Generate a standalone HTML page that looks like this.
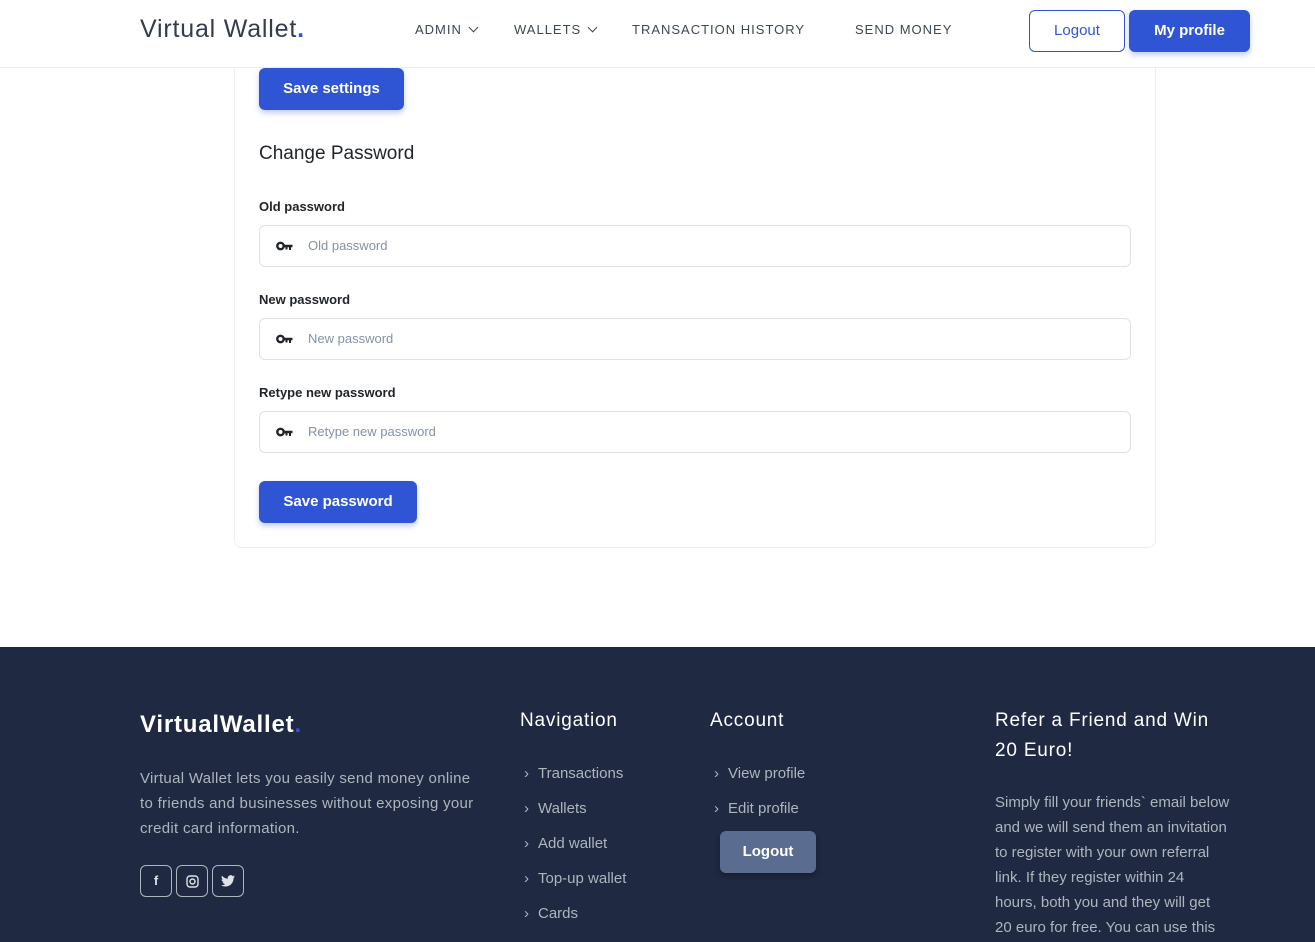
<!DOCTYPE html>
<html><head><meta charset="utf-8"><style>
*{box-sizing:border-box;margin:0;padding:0}
body{width:1315px;height:942px;overflow:hidden;font-family:"Liberation Sans",sans-serif;background:#fff;position:relative;color:#212529}
.hdr{position:absolute;left:0;top:0;width:1315px;height:68px;background:#fff;border-bottom:1px solid #eceef2;z-index:2}
.logo{position:absolute;left:140px;top:15px;font-size:25px;color:#333b4d;letter-spacing:.8px}
.logo b,.flogo b{color:#2f55d4}
.nav{position:absolute;top:22px;font-size:13px;letter-spacing:1px;color:#3c4858}
.chev{display:inline-block;width:7px;height:7px;border-right:1.5px solid #3c4858;border-bottom:1.5px solid #3c4858;transform:rotate(45deg);margin-left:8px;position:relative;top:-3px}
.btn{position:absolute;border-radius:6px;font-size:15px;text-align:center}
.card{position:absolute;left:234px;top:40px;width:922px;height:508px;border:1px solid #eceef2;border-top:none;border-radius:0 0 8px 8px}
.pbtn{background:#2f55d4;color:#fff;font-weight:bold;box-shadow:0 3px 6px rgba(47,85,212,.3)}
.lbl{position:absolute;left:259px;font-size:13px;font-weight:bold;color:#212529}
.inp{position:absolute;left:259px;width:872px;height:42px;border:1px solid #dee2e6;border-radius:6px;font-size:13px;color:#8492a6;padding:12px 0 0 48px}
.key{position:absolute;left:16px;top:15px;width:17px;height:10px}
.foot{position:absolute;left:0;top:647px;width:1315px;height:295px;background:#202942;color:#adb5bd}
.foot h5{position:absolute;color:#fff;font-size:19px;font-weight:normal;letter-spacing:.8px;line-height:30px}
.foot p{position:absolute;font-size:15px;line-height:25px;white-space:nowrap}
.li{position:absolute;font-size:15px}
.li:before{content:"›";margin-right:9px;font-size:15px}
.soc{position:absolute;top:218px;width:32px;height:32px;border:1px solid #adb5bd;border-radius:6px;color:#dee2e6;font-size:13px;text-align:center;line-height:30px;font-weight:bold}
</style></head><body>
<div class="hdr">
<div class="logo">Virtual Wallet<b>.</b></div>
<div class="nav" style="left:415px">ADMIN<span class="chev"></span></div>
<div class="nav" style="left:514px">WALLETS<span class="chev"></span></div>
<div class="nav" style="left:632px">TRANSACTION HISTORY</div>
<div class="nav" style="left:855px">SEND MONEY</div>
<div class="btn" style="left:1029px;top:10px;width:96px;height:42px;border:1px solid #2f55d4;color:#2f55d4;line-height:40px">Logout</div>
<div class="btn pbtn" style="left:1129px;top:10px;width:121px;height:42px;line-height:42px">My profile</div>
</div>
<div class="card"></div>
<div class="btn pbtn" style="left:259px;top:68px;width:145px;height:42px;line-height:42px">Save settings</div>
<div style="position:absolute;left:259px;top:143px;font-size:19px;color:#212529">Change Password</div>
<div class="lbl" style="top:199px">Old password</div>
<div class="inp" style="top:225px"><svg class="key" viewBox="0 0 17 10"><circle cx="4.5" cy="5" r="3.2" fill="none" stroke="#212529" stroke-width="2.4"/><path d="M7 3.8h9.5v2.4H15V9h-2V6.2h-1.5V8.5h-2V6.2H7z" fill="#212529"/></svg>Old password</div>
<div class="lbl" style="top:292px">New password</div>
<div class="inp" style="top:318px"><svg class="key" viewBox="0 0 17 10"><circle cx="4.5" cy="5" r="3.2" fill="none" stroke="#212529" stroke-width="2.4"/><path d="M7 3.8h9.5v2.4H15V9h-2V6.2h-1.5V8.5h-2V6.2H7z" fill="#212529"/></svg>New password</div>
<div class="lbl" style="top:385px">Retype new password</div>
<div class="inp" style="top:411px"><svg class="key" viewBox="0 0 17 10"><circle cx="4.5" cy="5" r="3.2" fill="none" stroke="#212529" stroke-width="2.4"/><path d="M7 3.8h9.5v2.4H15V9h-2V6.2h-1.5V8.5h-2V6.2H7z" fill="#212529"/></svg>Retype new password</div>
<div class="btn pbtn" style="left:259px;top:481px;width:158px;height:42px;line-height:42px">Save password</div>
<div class="foot">
<div class="flogo" style="position:absolute;left:140px;top:64px;font-size:24px;color:#fff;font-weight:bold;letter-spacing:.8px">VirtualWallet<b>.</b></div>
<p style="left:140px;top:119px;letter-spacing:.3px">Virtual Wallet lets you easily send money online<br>to friends and businesses without exposing your<br>credit card information.</p>
<div class="soc" style="left:140px">f</div><div class="soc" style="left:176px"><svg width="13" height="13" viewBox="0 0 13 13" style="margin-top:9px"><rect x="1" y="1" width="11" height="11" rx="3" fill="none" stroke="#dee2e6" stroke-width="1.4"/><circle cx="6.5" cy="6.5" r="2.5" fill="none" stroke="#dee2e6" stroke-width="1.4"/></svg></div><div class="soc" style="left:212px"><svg width="14" height="12" viewBox="0 0 24 20" style="margin-top:9px"><path d="M24 2.4a10 10 0 0 1-2.8.8A5 5 0 0 0 23.3.4a10 10 0 0 1-3.1 1.2A4.9 4.9 0 0 0 11.8 6 14 14 0 0 1 1.7.9a4.9 4.9 0 0 0 1.5 6.6A4.9 4.9 0 0 1 1 6.9a4.9 4.9 0 0 0 3.9 4.8 5 5 0 0 1-2.2.1 4.9 4.9 0 0 0 4.6 3.4A9.9 9.9 0 0 1 0 17.3 14 14 0 0 0 7.5 19.5c9.1 0 14-7.5 14-14v-.6A10 10 0 0 0 24 2.4z" fill="#dee2e6"/></svg></div>
<h5 style="left:520px;top:59px">Navigation</h5>
<div class="li" style="left:524px;top:118px">Transactions</div>
<div class="li" style="left:524px;top:153px">Wallets</div>
<div class="li" style="left:524px;top:188px">Add wallet</div>
<div class="li" style="left:524px;top:223px">Top-up wallet</div>
<div class="li" style="left:524px;top:258px">Cards</div>
<h5 style="left:710px;top:59px">Account</h5>
<div class="li" style="left:714px;top:118px">View profile</div>
<div class="li" style="left:714px;top:153px">Edit profile</div>
<div class="btn" style="left:720px;top:184px;width:96px;height:42px;line-height:42px;background:#5a6d90;color:#fff;font-weight:bold;box-shadow:0 3px 6px rgba(0,0,0,.3)">Logout</div>
<h5 style="left:995px;top:59px;width:240px">Refer a Friend and Win<br>20 Euro!</h5>
<p style="left:995px;top:143px">Simply fill your friends` email below<br>and we will send them an invitation<br>to register with your own referral<br>link. If they register within 24<br>hours, both you and they will get<br>20 euro for free. You can use this</p>
</div>
</body></html>
